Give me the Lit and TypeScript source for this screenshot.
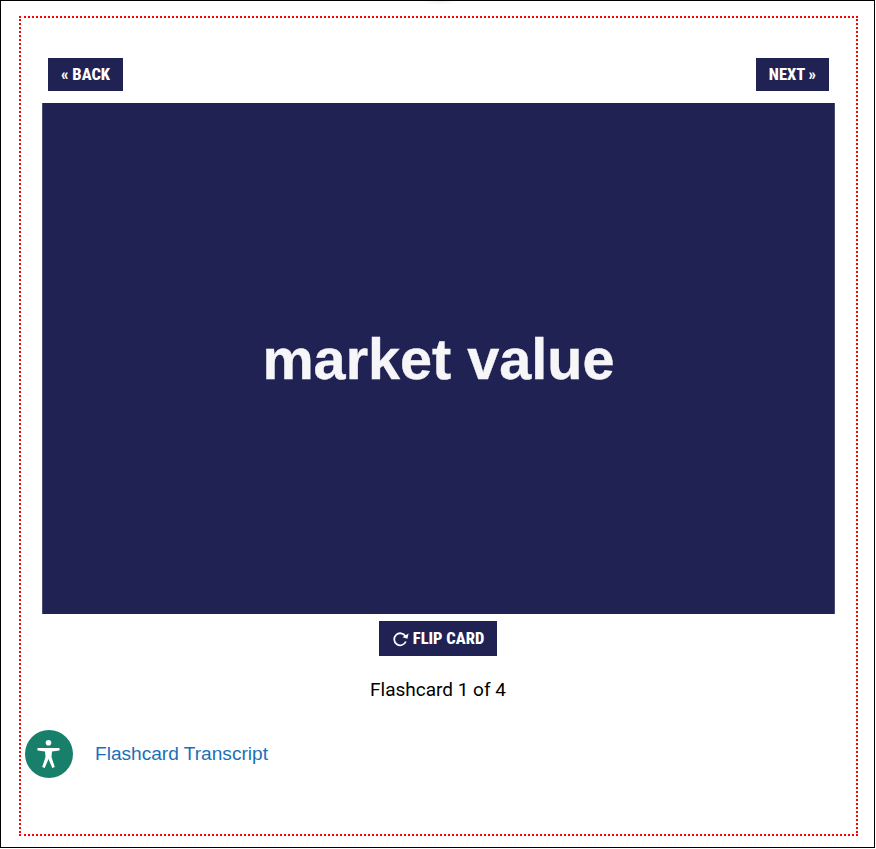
import { LitElement, html, css } from "lit";
import { customElement } from "lit/decorators.js";

@customElement("app-root")
export class AppRoot extends LitElement {
  static styles = css`
    :host {
      display: block;
      width: 875px;
      height: 848px;
      box-sizing: border-box;
      border: 1px solid #000;
      background: #fff;
      position: relative;
      font-family: Roboto, sans-serif;
    }
    .frame {
      box-sizing: border-box;
      margin: 15px 0 0 18px;
      width: 839px;
      height: 820px;
      border: 2px dotted #f00;
      padding: 40px 0 0 21px;
    }
    .nav {
      display: flex;
      justify-content: space-between;
      width: 781px;
      margin-left: 6px;
    }
    .btn {
      display: inline-flex;
      align-items: center;
      justify-content: center;
      gap: 4px;
      box-sizing: border-box;
      border: 0;
      padding: 0;
      background: #202254;
      color: #fff;
      font-family: Roboto, sans-serif;
      font-weight: 800;
      font-size: 16.5px;
      font-stretch: 75%;
      height: 33px;
    }
    .back { width: 75px; }
    .next { width: 73px; }
    .card {
      margin-top: 12px;
      width: 793px;
      height: 511px;
      box-sizing: border-box;
      background: #202254;
      border-left: 1px solid #4a4c72;
      border-right: 1px solid #4a4c72;
      display: flex;
      align-items: center;
      justify-content: center;
      color: #f6f6f9;
      font-family: "Liberation Sans", Arial, sans-serif;
      font-weight: 700;
      font-size: 57.6px;
      -webkit-text-stroke: 0.4px #f6f6f9;
    }
    .flip-row {
      width: 792px;
      display: flex;
      justify-content: center;
      margin-top: 7px;
    }
    .flip { width: 118px; height: 35px; }
    .flip svg { display: block; }
    .count {
      width: 792px;
      text-align: center;
      margin-top: 23px;
      font-size: 19px;
      line-height: 21px;
      color: #000;
    }
    .link {
      display: block;
      margin: 42px 0 0 53px;
      width: max-content;
      font-family: "Liberation Sans", Arial, sans-serif;
      font-size: 19.1px;
      line-height: 23px;
      color: #1a6fb8;
      text-decoration: none;
    }
    .a11y {
      position: absolute;
      left: 24px;
      top: 729px;
      width: 48px;
      height: 48px;
      border-radius: 50%;
      background: #18806a;
      display: flex;
      align-items: center;
      justify-content: center;
    }
    .glow {
      position: absolute;
      left: 420px;
      top: 0;
      width: 36px;
      height: 4px;
      background: radial-gradient(ellipse at 50% 0, #f0f0f0, #fff 70%);
    }
  `;

  render() {
    return html`
      <div class="glow"></div>
      <div class="frame">
        <div class="nav">
          <button class="btn back">« BACK</button>
          <button class="btn next">NEXT »</button>
        </div>
        <div class="card">market value</div>
        <div class="flip-row">
          <button class="btn flip">
            <svg width="17" height="16" viewBox="0 0 17 16" fill="none" stroke="#fff" stroke-width="1.8">
              <path d="M13.4 5.2A6 6 0 1 0 13.8 10.5" />
              <path d="M16.6 2.4l-1.2 5.4-5-1.6z" fill="#fff" stroke="none" />
            </svg>
            FLIP CARD
          </button>
        </div>
        <div class="count">Flashcard 1 of 4</div>
        <a class="link" href="#">Flashcard Transcript</a>
      </div>
      <div class="a11y" aria-label="Accessibility">
        <svg width="48" height="48" viewBox="0 0 48 48" fill="#fff">
          <circle cx="23.5" cy="12.7" r="2.8" />
          <path d="M12.7 18 L34.3 18 Q35 19.5 34.3 20.5 L27 21.5 L26.5 27 L29.8 37 L27.3 38 L23.5 29 L19.7 38 L17.2 37 L20.5 27 L20 21.5 L12.7 20.5 Q12 19.5 12.7 18Z" />
        </svg>
      </div>
    `;
  }
}
